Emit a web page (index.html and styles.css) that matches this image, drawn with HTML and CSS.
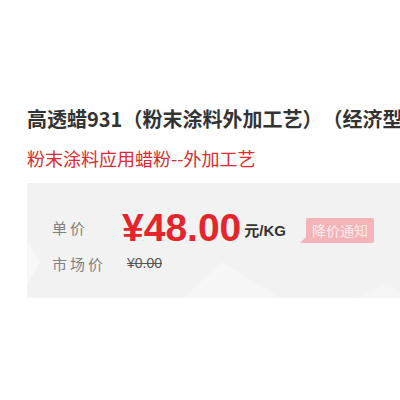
FILE: index.html
```html
<!DOCTYPE html>
<html lang="zh-CN">
<head>
    <meta charset="UTF-8">
    <meta name="viewport" content="width=device-width, initial-scale=1.0">
    <title>高透蜡931</title>
    <link rel="stylesheet" href="styles.css">
</head>
<body>

    <div class="product">
        <h1 class="title">高透蜡931（粉末涂料外加工艺）（经济型）</h1>
        <p class="subtitle">粉末涂料应用蜡粉--外加工艺</p>

        <div class="price-box">
            <svg class="price-bg" width="800" height="115" viewBox="0 0 800 115">
                <polygon points="0,57 13,79 0,102" fill="#f8f8f8"/>
                <polygon points="156,115 195,79 253,115" fill="#f6f6f6"/>
                <polygon points="330,115 360,100 380,115" fill="#f5f5f5"/>
            </svg>

            <div class="price-row">
                <span class="label">单价</span>
                <span class="price">¥48.00</span>
                <span class="unit">元/KG</span>
                <span class="notify">降价通知</span>
            </div>

            <div class="market-row">
                <span class="label">市场价</span>
                <span class="market-price">¥0.00</span>
            </div>
        </div>
    </div>

</body>
</html>
```

FILE: styles.css
```css
body {
    margin: 0;
    background-color: #fff;
    font-family: "Noto Sans CJK SC", "Liberation Sans", sans-serif;
    overflow: hidden;
}

.product {
    width: 800px;
    padding: 104px 0 0 27px;
}

.title {
    margin: 0;
    font-size: 20px;
    line-height: 30px;
    font-weight: bold;
    color: #333;
    white-space: nowrap;
    text-spacing-trim: space-all;
}

.subtitle {
    margin: 9px 0 0;
    font-size: 18px;
    line-height: 30px;
    color: #dc2a30;
}

.price-box {
    position: relative;
    margin-top: 10px;
    height: 115px;
    padding: 22px 0 0 25px;
    box-sizing: border-box;
    background-color: #f2f2f2;
}

.price-bg {
    position: absolute;
    left: 0;
    top: 0;
}

.price-row,
.market-row {
    position: relative;
    display: flex;
    align-items: center;
}

.price-row {
    height: 45px;
}

.market-row {
    height: 26px;
}

.label {
    width: 70px;
    font-size: 15px;
    letter-spacing: 3px;
    color: #808080;
}

.price {
    font-family: "Liberation Sans", Arial, sans-serif;
    font-size: 39px;
    font-weight: bold;
    line-height: 1;
    color: #e4262c;
}

.unit {
    margin: 4px 0 0 3px;
    font-family: "Liberation Sans", "Noto Sans CJK SC", sans-serif;
    font-size: 15px;
    font-weight: bold;
    color: #333;
}

.notify {
    position: relative;
    margin: 6px 0 0 20px;
    padding: 0 6px;
    height: 25px;
    line-height: 25px;
    font-size: 14px;
    color: #fdeced;
    background-color: #f4b4b7;
    border-radius: 2px;
}

.notify::before {
    content: "";
    position: absolute;
    left: -6px;
    bottom: 0;
    border-bottom: 7px solid #f4b4b7;
    border-left: 7px solid transparent;
}

.market-price {
    padding-left: 5px;
    font-family: "Liberation Sans", Arial, sans-serif;
    font-size: 14px;
    color: #555;
    text-decoration: line-through;
}
```
